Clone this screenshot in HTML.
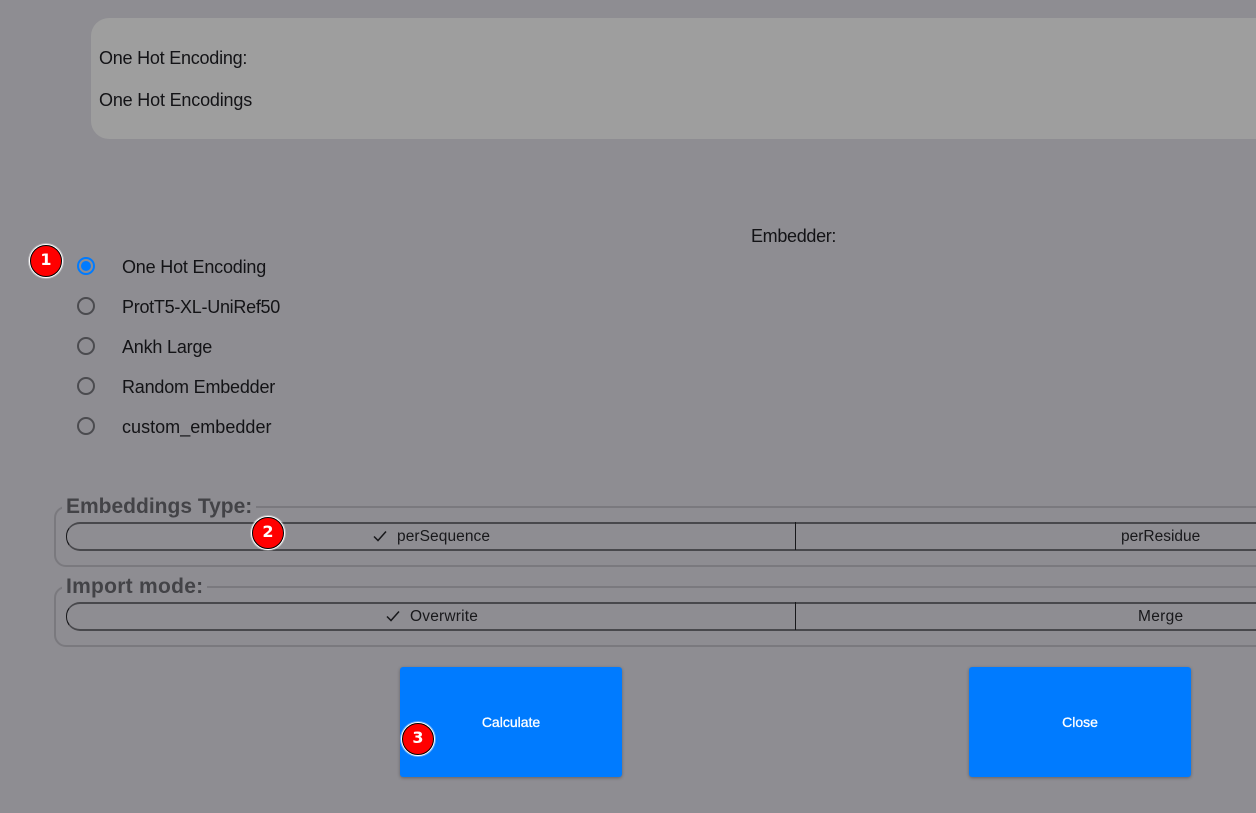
<!DOCTYPE html>
<html><head><meta charset="utf-8">
<style>
html,body{margin:0;padding:0}
body{width:1256px;height:813px;background:#8e8d92;position:relative;overflow:hidden;font-family:"Liberation Sans",sans-serif;color:#131316}
.t{position:absolute;white-space:nowrap;font-size:18px;line-height:22px}
.s{position:absolute;white-space:nowrap;font-size:15.5px;line-height:18px;color:#18181b}
.panel{position:absolute;left:91px;top:18px;width:1200px;height:121px;background:#9e9e9e;border-radius:18px}
.radio{position:absolute;left:77px;width:14px;height:14px;border:2px solid #4b4b4f;border-radius:50%}
.radio.on{border-color:#007bff}
.radio.on:after{content:"";position:absolute;left:2px;top:2px;width:10px;height:10px;border-radius:50%;background:#007bff}
.fs{position:absolute;left:54px;width:1300px;height:60px;border:2px solid #7a797e;border-radius:12px;box-sizing:border-box}
.leg{position:absolute;left:62px;padding:0 4px;background:#8e8d92;font-size:21px;font-weight:bold;line-height:24px;color:#434347;white-space:nowrap}
.tg{position:absolute;left:66px;width:1300px;height:29px;border:1px solid #18181b;border-top:2px solid #48484c;border-bottom:2px solid #48484c;border-radius:14px;box-sizing:border-box}
.div{position:absolute;left:795px;width:1px;height:28px;background:#18181b}
.btn{position:absolute;top:667px;width:222px;height:110px;background:#007bff;border-radius:3px;box-shadow:0 1px 3px rgba(0,0,0,.3);color:#fff;font-size:14px;-webkit-text-stroke:.3px #fff;text-align:center;line-height:110px}
.b{position:absolute;width:30px;height:30px;border-radius:50%;background:#f00;border:1px solid #000;box-shadow:0 0 0 1px #fff,0 0 0 2px rgba(255,255,255,.35);color:#fff;font:bold 16px/28px "DejaVu Sans",sans-serif;text-align:center}
svg{position:absolute}
</style></head><body>
<div class="panel"></div>
<div class="t" style="left:99px;top:47px;letter-spacing:-.23px">One Hot Encoding:</div>
<div class="t" style="left:99px;top:89px;letter-spacing:-.18px">One Hot Encodings</div>
<div class="t" style="left:751px;top:225px;letter-spacing:-.33px">Embedder:</div>

<div class="radio on" style="top:257px"></div>
<div class="radio" style="top:297px"></div>
<div class="radio" style="top:337px"></div>
<div class="radio" style="top:377px"></div>
<div class="radio" style="top:417px"></div>
<div class="t" style="left:122px;top:256px;letter-spacing:-.19px">One Hot Encoding</div>
<div class="t" style="left:122px;top:296px;letter-spacing:-.28px">ProtT5-XL-UniRef50</div>
<div class="t" style="left:122px;top:336px;letter-spacing:-.2px">Ankh Large</div>
<div class="t" style="left:122px;top:376px;letter-spacing:-.2px">Random Embedder</div>
<div class="t" style="left:122px;top:416px;letter-spacing:.03px">custom_embedder</div>

<div class="fs" style="top:506px;height:61px"></div>
<div class="leg" style="top:495px">Embeddings Type:</div>
<div class="tg" style="top:522px"></div>
<div class="div" style="top:522px"></div>
<svg style="left:372px;top:529px" width="16" height="14" viewBox="0 0 16 14"><path d="M2 7.5L6 11.5L14 2.5" fill="none" stroke="#18181b" stroke-width="1.5"/></svg>
<div class="s" style="left:397px;top:528px;letter-spacing:.08px">perSequence</div>
<div class="s" style="left:1121px;top:528px">perResidue</div>

<div class="fs" style="top:586px;height:61px"></div>
<div class="leg" style="top:575px;letter-spacing:.27px">Import mode:</div>
<div class="tg" style="top:602px"></div>
<div class="div" style="top:602px"></div>
<svg style="left:385px;top:609px" width="16" height="14" viewBox="0 0 16 14"><path d="M2 7.5L6 11.5L14 2.5" fill="none" stroke="#18181b" stroke-width="1.5"/></svg>
<div class="s" style="left:410px;top:608px;letter-spacing:.2px">Overwrite</div>
<div class="s" style="left:1138px;top:608px;letter-spacing:.3px">Merge</div>

<div class="btn" style="left:400px">Calculate</div>
<div class="btn" style="left:969px">Close</div>

<div class="b" style="left:30px;top:245px">1</div>
<div class="b" style="left:252px;top:517px">2</div>
<div class="b" style="left:402px;top:723px">3</div>
</body></html>
